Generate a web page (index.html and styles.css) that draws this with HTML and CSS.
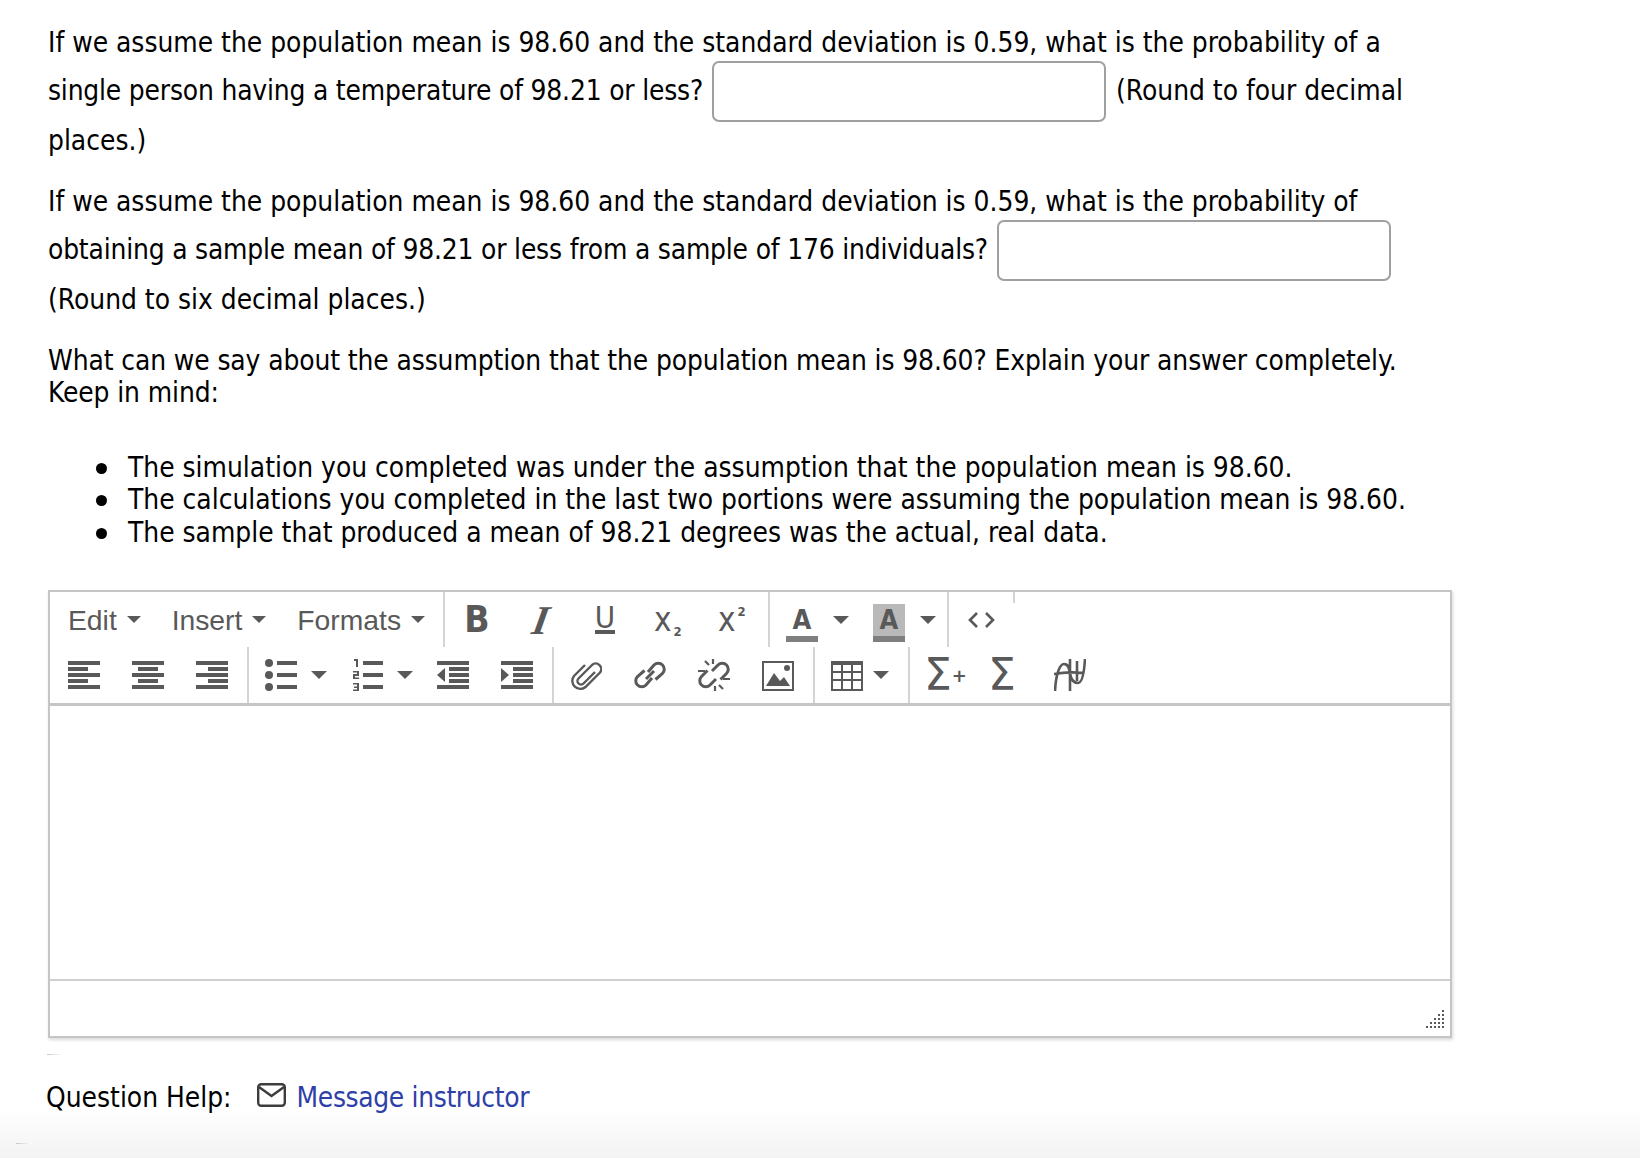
FILE: index.html
```html
<!DOCTYPE html>
<html lang="en">

<head>
    <meta charset="UTF-8">
    <title>Question</title>
    <link rel="stylesheet" href="styles.css">
</head>

<body>
    <div class="pregunta">
        <p>If we assume the population mean is 98.60 and the standard deviation is 0.59, what is the probability of a <span class="ajuste">single person having a temperature of 98.21 or less?</span> <input type="text" class="respuesta"> (Round to four decimal places.)</p>
        <p class="segundo">If we assume the population mean is 98.60 and the standard deviation is 0.59, what is the probability of <span class="ajuste">obtaining a sample mean of 98.21 or less from a sample of 176 individuals?</span> <input type="text" class="respuesta"> (Round to six decimal places.)</p>
        <p class="tercero">What can we say about the assumption that the population mean is 98.60? Explain your answer completely.<br>Keep in mind:</p>
        <ul>
            <li>The simulation you completed was under the assumption that the population mean is 98.60.</li>
            <li>The calculations you completed in the last two portions were assuming the population mean is 98.60.</li>
            <li>The sample that produced a mean of 98.21 degrees was the actual, real data.</li>
        </ul>
    </div>

    <div class="editor">
        <div class="toolbar">
            <div class="fila fila-menu">
                <div class="grupo grupo-menu">
                    <span class="menu">Edit <i class="caret"></i></span>
                    <span class="menu">Insert <i class="caret"></i></span>
                    <span class="menu">Formats <i class="caret"></i></span>
                </div>
                <div class="grupo">
                    <span class="btn"><span class="glifo negrita">B</span></span>
                    <span class="btn"><span class="glifo cursiva">I</span></span>
                    <span class="btn"><span class="glifo subrayado">U</span></span>
                    <span class="btn"><span class="glifo indice">x<sub>2</sub></span></span>
                    <span class="btn"><span class="glifo indice">x<sup>2</sup></span></span>
                </div>
                <div class="grupo">
                    <span class="btn btn-color"><span class="glifo letra">A</span><i class="caret"></i></span>
                    <span class="btn btn-color"><span class="glifo letra fondo">A</span><i class="caret"></i></span>
                </div>
                <div class="grupo">
                    <span class="btn">
                        <svg class="icono" viewBox="0 0 32 32"><path d="M12 9 5 16l7 7M21 9l7 7-7 7" fill="none" stroke="#595959" stroke-width="2.600"/></svg>
                    </span>
                </div>
                <div class="grupo grupo-fin"></div>
            </div>
            <div class="fila">
                <div class="grupo">
                    <span class="btn">
                        <svg class="icono" viewBox="0 0 32 32"><path d="M0 2h32v4H0zM0 8h20v4H0zM0 14h32v4H0zM0 20h20v4H0zM0 26h32v4H0z"/></svg>
                    </span>
                    <span class="btn">
                        <svg class="icono" viewBox="0 0 32 32"><path d="M0 2h32v4H0zM6 8h20v4H6zM0 14h32v4H0zM6 20h20v4H6zM0 26h32v4H0z"/></svg>
                    </span>
                    <span class="btn">
                        <svg class="icono" viewBox="0 0 32 32"><path d="M0 2h32v4H0zM12 8h20v4H12zM0 14h32v4H0zM12 20h20v4H12zM0 26h32v4H0z"/></svg>
                    </span>
                </div>
                <div class="grupo">
                    <span class="btn btn-lista">
                        <svg class="icono" viewBox="0 0 32 32"><circle cx="4" cy="4" r="4"/><circle cx="4" cy="16" r="4"/><circle cx="4" cy="28" r="4"/><path d="M12 2h20v4H12zM12 14h20v4H12zM12 26h20v4H12z"/></svg>
                        <i class="caret"></i>
                    </span>
                    <span class="btn btn-num">
                        <svg class="icono" viewBox="0 0 32 32"><path d="M1 0h4v8H3V2H1zM0 12h6v5H2v1.500h4V20H0v-5h4v-1.500H0zM0 24h6v8H0v-1.500h4V29H1v-1.500h3v-2H0zM10 2h20v4H10zM10 14h20v4H10zM10 26h20v4H10z"/></svg>
                        <i class="caret"></i>
                    </span>
                    <span class="btn">
                        <svg class="icono" viewBox="0 0 32 32"><path d="M0 2h32v4H0zM12 8h20v4H12zM12 14h20v4H12zM12 20h20v4H12zM0 26h32v4H0zM8 9v14l-8-7z"/></svg>
                    </span>
                    <span class="btn">
                        <svg class="icono" viewBox="0 0 32 32"><path d="M0 2h32v4H0zM12 8h20v4H12zM12 14h20v4H12zM12 20h20v4H12zM0 26h32v4H0zM0 9v14l8-7z"/></svg>
                    </span>
                </div>
                <div class="grupo">
                    <span class="btn">
                        <svg class="icono" viewBox="0 0 32 32"><path d="M25 13 13.500 24.500a3.400 3.400 0 0 1-5-5L22 6a5.500 5.500 0 0 1 8 7.500L15.500 28a8 8 0 0 1-11.500-11L15 6" fill="none" stroke="#595959" stroke-width="2.400"/></svg>
                    </span>
                    <span class="btn">
                        <svg class="icono" viewBox="0 0 32 32"><g fill="none" stroke="#595959" stroke-width="3"><path d="M14 13l6-7a6 6 0 0 1 8.500 8.500l-7 6"/><path d="M18 19l-6 7a6 6 0 0 1-8.500-8.500l7-6"/><path d="M12 20l8-8"/></g></svg>
                    </span>
                    <span class="btn">
                        <svg class="icono" viewBox="0 0 32 32"><g fill="none" stroke="#595959" stroke-width="3"><path d="M14 12l6-6a6 6 0 0 1 8.500 8.500l-6 6"/><path d="M18 20l-6 6a6 6 0 0 1-8.500-8.500l6-6"/><path d="M7 2l4 4M15 0v5M0 12h7M25 30l-4-4M17 32v-5M32 20h-7" stroke-width="2.200"/></g></svg>
                    </span>
                    <span class="btn">
                        <svg class="icono" viewBox="0 0 32 32"><path d="M0 2h32v30H0zM2 4v26h28V4z" fill-rule="evenodd"/><path d="M4 27 12 14l6 8 4-4 6 9z"/><circle cx="25" cy="9" r="3"/></svg>
                    </span>
                </div>
                <div class="grupo">
                    <span class="btn btn-tabla">
                        <svg class="icono" viewBox="0 0 32 32"><path d="M0 2h32v30H0zM2 6v6h8V6zM12 6v6h8V6zM22 6v6h8V6zM2 14v6h8v-6zM12 14v6h8v-6zM22 14v6h8v-6zM2 22v8h8v-8zM12 22v8h8v-8zM22 22v8h8v-8z" fill-rule="evenodd"/></svg>
                        <i class="caret"></i>
                    </span>
                </div>
                <div class="grupo">
                    <span class="btn"><span class="glifo sigma">Σ<em>+</em></span></span>
                    <span class="btn"><span class="glifo sigma">Σ</span></span>
                    <span class="btn">
                        <svg class="icono" viewBox="0 0 32 32"><path d="M1 32C2 14 6 5 10 5s6 5 6 12M0 15c10-2 20-2 30-1M16 0v32M16 14c1 7 4 10 8 10s6-8 7-24M23 2v20" fill="none" stroke="#595959" stroke-width="2.600"/></svg>
                    </span>
                </div>
            </div>
        </div>
        <div class="area"></div>
        <div class="estado">
            <svg class="asa" viewBox="0 0 20 20"><path d="M17 0h2v2h-2zM13 4h2v2h-2zM17 4h2v2h-2zM9 8h2v2H9zM13 8h2v2h-2zM17 8h2v2h-2zM5 12h2v2H5zM9 12h2v2H9zM13 12h2v2h-2zM17 12h2v2h-2zM1 16h2v2H1zM5 16h2v2H5zM9 16h2v2H9zM13 16h2v2h-2zM17 16h2v2h-2z"/></svg>
        </div>
    </div>

    <div class="marca"></div>

    <div class="ayuda">
        <span>Question Help:</span>
        <svg class="sobre" viewBox="0 0 29 24"><rect x="1.200" y="1.200" width="26.600" height="21.600" rx="3" fill="none" stroke="#3c3c3c" stroke-width="2.400"/><path d="M2 4l12.500 9L27 4" fill="none" stroke="#3c3c3c" stroke-width="2.400"/></svg>
        <a href="#">Message instructor</a>
    </div>

    <div class="marca marca-baja"></div>
</body>

</html>
```

FILE: styles.css
```css
html,
body {
    height: 100%;
}

body {
    margin: 0;
    padding: 0;
    overflow: hidden;
    font-family: "DejaVu Sans Condensed", "DejaVu Sans", sans-serif;
    font-stretch: condensed;
    font-size: 27.850px;
    line-height: 32px;
    color: #000000;
    background: linear-gradient(#ffffff 1107px, #f3f3f3 1158px);
}

.pregunta {
    width: 1412px;
    padding: 27px 0 0 48px;
}

p {
    margin: 0;
}

.ajuste {
    letter-spacing: -0.180px;
}

.respuesta {
    width: 394px;
    height: 61px;
    margin: 2px 2px 3px 1px;
    padding: 0;
    border: 2px solid #a0a0a0;
    border-radius: 7px;
    box-sizing: border-box;
    background-color: #ffffff;
    vertical-align: middle;
}

.segundo {
    margin-top: 29px;
}

.tercero {
    margin-top: 29px;
    letter-spacing: -0.100px;
}

ul {
    margin: 43px 0 0;
    padding-left: 80px;
    list-style: none;
}

li {
    position: relative;
    line-height: 32.400px;
}

li::before {
    content: "";
    position: absolute;
    left: -32px;
    top: 11px;
    width: 11px;
    height: 11px;
    border-radius: 50%;
    background-color: #000000;
}

.editor {
    width: 1404px;
    height: 448px;
    margin: 41px 0 0 48px;
    border: 2px solid #c5c5c5;
    box-sizing: border-box;
    box-shadow: 1px 2px 3px rgba(0, 0, 0, 0.15);
    display: flex;
    flex-direction: column;
    font-family: "Liberation Sans", Arial, sans-serif;
    font-stretch: normal;
    color: #595959;
}

.toolbar {
    border-bottom: 3px solid #c5c5c5;
    padding-left: 2px;
}

.fila {
    display: flex;
    height: 56px;
}

.fila-menu {
    height: 55px;
}

.grupo {
    display: flex;
    align-items: center;
    border-left: 2px solid #d4d4d4;
    margin-left: 3px;
}

.grupo:first-child {
    border-left: none;
    margin-left: 0;
}

.grupo-menu {
    gap: 31px;
    padding: 0 15px 0 16px;
}

.grupo-fin {
    height: 11px;
    align-self: flex-start;
    margin-left: 0;
}

.menu {
    font-size: 28.300px;
    white-space: nowrap;
}

.caret {
    display: inline-block;
    width: 0;
    height: 0;
    border-left: 8px solid transparent;
    border-right: 8px solid transparent;
    border-top: 8px solid #595959;
    vertical-align: 7px;
    margin-left: 2px;
}

.menu .caret {
    border-left-width: 7px;
    border-right-width: 7px;
    border-top-width: 7px;
}

.btn {
    display: flex;
    align-items: center;
    padding: 0 16px;
}

.btn .caret {
    margin-left: 0;
    vertical-align: baseline;
}

.btn-lista {
    gap: 14px;
    padding-right: 10px;
}

.btn-num {
    gap: 12px;
    padding-right: 8px;
}

.btn-tabla {
    gap: 10px;
    padding-right: 16px;
}

.btn-color {
    gap: 15px;
    padding-right: 8px;
}

.icono {
    display: block;
    width: 32px;
    height: 32px;
    fill: #595959;
}

.glifo {
    position: relative;
    display: block;
    width: 32px;
    height: 32px;
    line-height: 32px;
    text-align: center;
    white-space: nowrap;
    font-family: "DejaVu Sans Condensed", "DejaVu Sans", sans-serif;
}

.negrita {
    font-weight: bold;
    font-size: 37px;
}

.cursiva {
    font-family: "Liberation Serif", serif;
    font-style: italic;
    font-weight: bold;
    font-size: 41px;
    transform: skewX(-10deg);
}

.subrayado {
    font-size: 31px;
    line-height: 27px;
}

.subrayado::after {
    content: "";
    position: absolute;
    left: 6px;
    right: 6px;
    bottom: 2px;
    height: 4px;
    background-color: #595959;
}

.indice {
    font-size: 33px;
    text-align: left;
    padding-left: 1px;
    box-sizing: border-box;
}

.indice sub,
.indice sup {
    position: relative;
    font-size: 13px;
    line-height: 0;
    font-weight: bold;
    vertical-align: baseline;
    margin-left: 2px;
}

.indice sub {
    top: 5px;
}

.indice sup {
    top: -15px;
}

.letra {
    font-weight: bold;
    font-size: 27px;
    height: 38px;
    line-height: 32px;
    margin-top: 6px;
}

.letra::after {
    content: "";
    position: absolute;
    left: 0;
    right: 0;
    top: 32px;
    height: 6px;
    background-color: #7f7f7f;
}

.fondo {
    background-color: #b9b9b9;
}

.sigma {
    left: -2px;
    font-family: "DejaVu Sans", sans-serif;
    font-stretch: normal;
    font-size: 44px;
    text-align: left;
    line-height: 32px;
}

.sigma em {
    font-style: normal;
    font-size: 18px;
    font-weight: bold;
    vertical-align: 8px;
}

.area {
    flex: 1;
}

.estado {
    height: 49px;
    border-top: 2px solid #d0d0d0;
    display: flex;
    justify-content: flex-end;
    align-items: flex-end;
    padding: 0 5px 6px 0;
}

.asa {
    width: 20px;
    height: 20px;
    fill: #595959;
}

.marca {
    width: 16px;
    height: 1px;
    margin: 16px 0 0 47px;
    background: linear-gradient(to right, #c8c8c8, #ffffff);
}

.ayuda {
    display: flex;
    align-items: center;
    margin: 27px 0 0 46px;
    height: 32px;
}

.sobre {
    width: 29px;
    height: 24px;
    margin: -6px 11px 0 25px;
}

a {
    color: #2f3fa8;
    text-decoration: none;
    letter-spacing: -0.350px;
}

.marca-baja {
    margin: 29px 0 0 16px;
}
```
